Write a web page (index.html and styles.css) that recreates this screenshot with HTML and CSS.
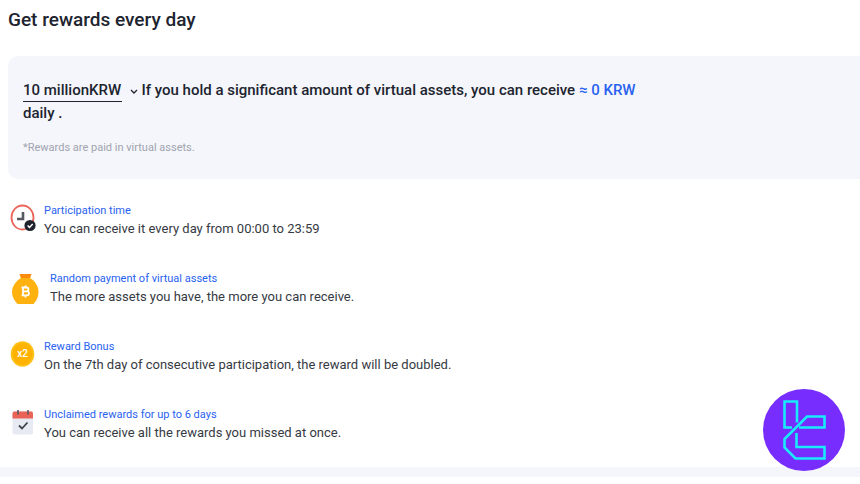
FILE: index.html
```html
<!DOCTYPE html>
<html lang="en">
<head>
<meta charset="utf-8">
<title>Get rewards every day</title>
<meta name="viewport" content="width=device-width, initial-scale=1">
<link rel="stylesheet" href="styles.css">
</head>
<body>
<main class="rewards">
  <h1 class="title">Get rewards every day</h1>
  <section class="panel">
    <p class="estimate">
      <select class="amount" aria-label="Amount held">
        <option>10 millionKRW</option>
      </select>
      <svg class="chevron" viewBox="0 0 8 6" aria-hidden="true"><path d="M1 1l3 3 3-3"/></svg>
      If you hold a significant amount of virtual assets, you can receive <span class="value">≈ 0 KRW</span> daily .
    </p>
    <p class="note">*Rewards are paid in virtual assets.</p>
  </section>
  <ul class="features">
    <li class="feature">
      <svg class="icon" viewBox="0 0 26 32" aria-hidden="true">
        <ellipse cx="12.500" cy="13.500" rx="11" ry="12" fill="#fff" stroke="#ea6459" stroke-width="1.800"/>
        <path d="M13 8v7H7" fill="none" stroke="#555960" stroke-width="2.600"/>
        <circle cx="20" cy="21.500" r="5.600" fill="#20232e"/>
        <path d="M17.600 21.500l1.900 1.900 3.200-3.500" fill="none" stroke="#fff" stroke-width="1.500"/>
      </svg>
      <div>
        <h2 class="name">Participation time</h2>
        <p class="text">You can receive it every day from 00:00 to 23:59</p>
      </div>
    </li>
    <li class="feature">
      <svg class="icon icon-wide" viewBox="0 0 32 32" aria-hidden="true">
        <path d="M9.500 2h12l-2 6h-8z" fill="#fb8c0b"/>
        <path d="M11 6h9c5 3 8.500 8 8.500 14 0 5-2 9-5 12H7.500c-3-3-5.500-7-5.500-12 0-6 4-11 9-14z" fill="#ffb110"/>
        <g fill="none" stroke="#fff" stroke-width="1.800">
          <path d="M11.500 15.500h5a1.900 1.900 0 0 1 0 3.800H13h4a2 2 0 0 1 0 4h-5.500M13 15.500v8M15.500 13.500v2M15.500 23.500v2"/>
        </g>
      </svg>
      <div>
        <h2 class="name">Random payment of virtual assets</h2>
        <p class="text">The more assets you have, the more you can receive.</p>
      </div>
    </li>
    <li class="feature">
      <svg class="icon" viewBox="0 0 26 32" aria-hidden="true">
        <ellipse cx="12.500" cy="14" rx="11.800" ry="12.800" fill="#ffc21a"/>
        <ellipse cx="12.500" cy="14" rx="10" ry="11" fill="#ffb300"/>
        <text class="badge" x="12.500" y="17" text-anchor="middle">x2</text>
      </svg>
      <div>
        <h2 class="name">Reward Bonus</h2>
        <p class="text">On the 7th day of consecutive participation, the reward will be doubled.</p>
      </div>
    </li>
    <li class="feature">
      <svg class="icon" viewBox="0 0 26 32" aria-hidden="true">
        <rect x="2.500" y="3" width="20.500" height="23.500" rx="2" fill="#e7e9f3"/>
        <path d="M2.500 10.500V5.500q0-2 2-2h16.500q2 0 2 2v5z" fill="#e96457"/>
        <path d="M8 2v4.500M18 2v4.500" stroke="#555960" stroke-width="1.600"/>
        <path d="M9 17.500l3 3 5.500-6" fill="none" stroke="#3d424c" stroke-width="1.800"/>
      </svg>
      <div>
        <h2 class="name">Unclaimed rewards for up to 6 days</h2>
        <p class="text">You can receive all the rewards you missed at once.</p>
      </div>
    </li>
  </ul>
</main>
<div class="divider"></div>
<svg class="logo" viewBox="0 0 82 82" role="img" aria-label="Logo">
  <circle cx="41" cy="41" r="41" fill="#782dff"/>
  <g fill="none" stroke="#18ecfa" stroke-width="2.600">
    <path d="M29 38.500H21.500V12.500H34V33.500"/>
    <path d="M36 38.500H61.500V27.500H44L21.500 50V58.500L32.500 69.500H61.500V58H33.500V44"/>
  </g>
</svg>
</body>
</html>
```

FILE: styles.css
```css
* {
  box-sizing: border-box;
}

body {
  margin: 0;
  background: #fff;
  color: #20242f;
  font-family: Roboto, "Liberation Sans", sans-serif;
}

h1, h2, p, ul {
  margin: 0;
  padding: 0;
}

.rewards {
  padding: 8px 0 0 8px;
}

.title {
  font-size: 19px;
  line-height: 24px;
  font-weight: 500;
}

.panel {
  margin-top: 24px;
  padding: 23px 15px 22px;
  border-radius: 10px 0 0 10px;
  background: #f5f6fb;
}

.estimate {
  max-width: 630px;
  font-size: 15px;
  line-height: 23px;
  font-weight: 500;
}

.amount {
  appearance: none;
  height: 23px;
  padding: 0;
  border: 0;
  border-bottom: 1px solid #20242f;
  border-radius: 0;
  background: transparent;
  color: inherit;
  font: inherit;
}

.chevron {
  width: 8px;
  height: 6px;
  margin-left: 4px;
  fill: none;
  stroke: #20242f;
  stroke-width: 1.3;
}

.value {
  color: #2962f0;
}

.note {
  margin-top: 14px;
  color: #a0a3ae;
  font-size: 11px;
  line-height: 18px;
}

.features {
  display: grid;
  gap: 32px;
  margin-top: 23px;
  list-style: none;
}

.feature {
  display: flex;
  gap: 8px;
  padding-left: 2px;
}

.icon {
  flex: none;
  width: 26px;
  height: 32px;
  margin-top: 2px;
}

.icon-wide {
  width: 32px;
}

.badge {
  fill: #fff;
  font-size: 10px;
  font-weight: 500;
}

.name {
  color: #2962f0;
  font-size: 11px;
  line-height: 18px;
  font-weight: 400;
}

.text {
  color: #363a43;
  font-size: 13px;
  line-height: 18px;
}

.divider {
  height: 10px;
  margin-top: 25px;
  background: #f5f6fb;
}

.logo {
  position: fixed;
  right: 15px;
  bottom: 13px;
  width: 82px;
  height: 82px;
}
```
